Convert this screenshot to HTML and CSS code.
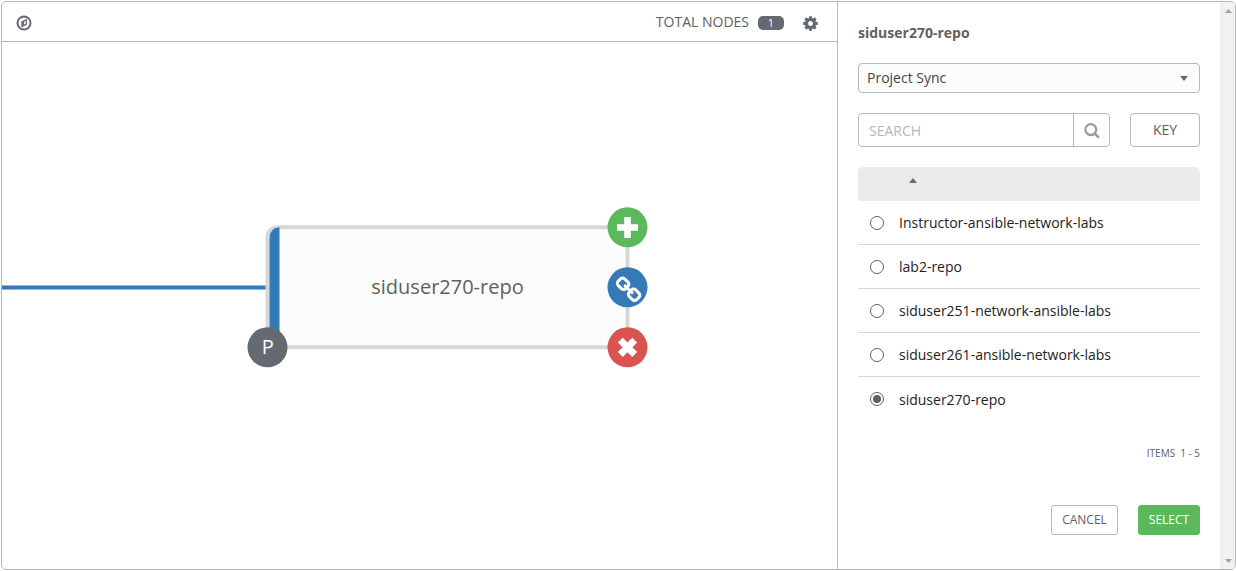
FILE: index.html
```html
<!DOCTYPE html>
<html lang="en">
<head>
<meta charset="utf-8">
<title>Workflow Visualizer</title>
<link rel="stylesheet" href="styles.css">
</head>
<body>
<div class="modal">
  <main class="graph">
    <header class="toolbar">
      <svg class="compass" width="16" height="16" viewBox="0 0 16 16"><circle cx="8" cy="8" r="6.500" fill="none" stroke="#646972" stroke-width="2"/><path fill="#646972" fill-rule="evenodd" d="M10.900 3.700V9.700L5.300 12.400V6.500ZM9.600 6 8 6.800V9.600L9.600 8.900Z"/></svg>
      <span class="total">TOTAL NODES</span>
      <span class="badge">1</span>
      <svg class="gear" width="17" height="17" viewBox="0 0 1792 1792"><path fill="#646972" d="M1152 896q0-106-75-181t-181-75-181 75-75 181 75 181 181 75 181-75 75-181zm512-109v222q0 12-8 23t-20 13l-185 28q-19 54-39 91 35 50 107 138 10 12 10 25t-9 23q-27 37-99 108t-94 71q-12 0-26-9l-138-108q-44 23-91 38-16 136-29 186-7 28-36 28h-222q-14 0-24.500-8.500t-11.500-21.500l-28-184q-49-16-90-37l-141 107q-10 9-25 9-14 0-25-11-126-114-165-168-7-10-7-23 0-12 8-23 15-21 51-66.500t54-70.500q-27-50-41-99l-183-27q-13-2-21-12.500t-8-23.500v-222q0-12 8-23t19-13l186-28q14-46 39-92-40-57-107-138-10-12-10-24 0-10 9-23 26-36 98.500-107.500t94.500-71.500q13 0 26 10l138 107q44-23 91-38 16-136 29-186 7-28 36-28h222q14 0 24.500 8.500t11.500 21.500l28 184q49 16 90 37l142-107q9-9 24-9 13 0 25 10 129 119 165 170 7 8 7 22 0 12-8 23-15 21-51 66.500t-54 70.500q26 50 41 98l183 28q13 2 21 12.500t8 23.500z"/></svg>
    </header>
    <svg class="canvas" width="835" height="527" viewBox="2 42 835 527">
      <path class="link" d="M0 287.500H266"/>
      <rect class="node" x="267.500" y="227.300" width="360" height="120" rx="10"/>
      <path class="stripe" d="M279.500 227.200V347.500H269.500V238Q270 227.700 279.500 227.200Z"/>
      <text class="node-name" x="447.500" y="294">siduser270-repo</text>
      <circle class="project" cx="267.500" cy="347.300" r="20"/>
      <text class="project-letter" x="267.800" y="354">P</text>
      <circle class="add" cx="627.500" cy="227.300" r="20"/>
      <path class="glyph" d="M624.200 217h6.600v7.200h7.200v6.600h-7.200v7.200h-6.600v-7.200H617v-6.600h7.200Z"/>
      <circle class="connect" cx="627.500" cy="287.300" r="20"/>
      <g transform="translate(614.600 276.300) scale(.0156)"><path class="glyph" d="M1520 1216q0-40-28-68l-208-208q-28-28-68-28-42 0-72 32 3 3 19 18.500t21.500 21.500 15 19 13 25.500 3.500 27.500q0 40-28 68t-68 28q-15 0-27.500-3.500t-25.500-13-19-15-21.500-21.500-18.500-19q-33 31-33 73 0 40 28 68l206 207q27 27 68 27 40 0 68-26l147-146q28-28 28-67zm-703-705q0-40-28-68l-206-207q-28-28-68-28-39 0-68 27l-147 146q-28 28-28 67 0 40 28 68l208 208q27 27 68 27 42 0 72-31-3-3-19-18.500t-21.500-21.500-15-19-13-25.500-3.500-27.500q0-40 28-68t68-28q15 0 27.500 3.500t25.500 13 19 15 21.500 21.500 18.500 19q33-31 33-73zm895 705q0 120-85 203l-147 146q-83 83-203 83-121 0-204-85l-206-207q-83-83-83-203 0-123 88-209l-88-88q-86 88-208 88-120 0-204-84l-208-208q-84-84-84-204t85-203l147-146q83-83 203-83 121 0 204 85l206 207q83 83 83 203 0 123-88 209l88 88q86-88 208-88 120 0 204 84l208 208q84 84 84 204z"/></g>
      <circle class="remove" cx="627.500" cy="347.300" r="20"/>
      <path class="cross" d="M620.300 340.100l14.400 14.400M634.700 340.100l-14.400 14.400"/>
    </svg>
  </main>
  <aside class="panel">
    <div class="form">
      <h1 class="title">siduser270-repo</h1>
      <div class="select"><span>Project Sync</span><svg width="8" height="5" viewBox="0 0 8 5"><path fill="#646972" d="M0 0h8L4 5Z"/></svg></div>
      <div class="search-row">
        <div class="search">
          <span class="placeholder">SEARCH</span>
          <span class="search-button"><svg width="16" height="16" viewBox="0 0 16 16" fill="none" stroke="#989ba1"><circle cx="6.800" cy="6.600" r="5.400" stroke-width="2.300"/><path stroke-width="2.700" stroke-linecap="round" d="M10.800 10.700l3.300 3.200"/></svg></span>
        </div>
        <span class="key">KEY</span>
      </div>
      <div class="list-head"><svg width="8" height="5" viewBox="0 0 8 5"><path fill="#646972" d="M0 5h8L4 0Z"/></svg></div>
      <div class="row"><span class="radio"></span>Instructor-ansible-network-labs</div>
      <div class="row"><span class="radio"></span>lab2-repo</div>
      <div class="row"><span class="radio"></span>siduser251-network-ansible-labs</div>
      <div class="row"><span class="radio"></span>siduser261-ansible-network-labs</div>
      <div class="row last"><span class="radio checked"></span>siduser270-repo</div>
      <div class="items"><span>ITEMS</span><span>1 - 5</span></div>
      <div class="actions"><span class="button">CANCEL</span><span class="button primary">SELECT</span></div>
    </div>
    <div class="scrollbar">
      <svg width="7" height="4" viewBox="0 0 7 4"><path fill="#a3a3a3" d="M0 4h7L3.500 0Z"/></svg>
      <svg width="7" height="4" viewBox="0 0 7 4"><path fill="#a3a3a3" d="M0 0h7L3.500 4Z"/></svg>
    </div>
  </aside>
</div>
</body>
</html>
```
FILE: styles.css
```css
* { box-sizing: border-box; }
body { margin: 0; padding: 1px 0 0 1px; height: 571px; overflow: hidden; background: #fff; color: #606060; font: 14px/20px "Open Sans", "Noto Sans", sans-serif; }
svg { display: block; flex: none; }
.modal { display: flex; width: 1235px; height: 569px; border: 1px solid #b7b7b7; border-radius: 5px; overflow: hidden; }
.graph { width: 836px; flex: none; border-right: 1px solid #b7b7b7; }
.toolbar { display: flex; align-items: center; height: 40px; padding: 0 18px 0 14px; border-bottom: 1px solid #b7b7b7; }
.compass { margin-top: 2px; }
.total { margin-left: auto; }
.badge { width: 26px; height: 14px; margin: 2px 18px 0 9px; border-radius: 5px; background: #646972; color: #fff; font-size: 11px; line-height: 14px; text-align: center; }
.gear { margin-top: 3px; }
.link { stroke: #337ab7; stroke-width: 4; }
.node { fill: #fcfcfc; stroke: #d7d7d7; stroke-width: 4; }
.stripe { fill: #337ab7; }
.node-name { font-size: 20px; fill: #606060; text-anchor: middle; }
.project { fill: #646972; }
.project-letter { font-size: 20px; fill: #fff; text-anchor: middle; }
.add { fill: #5cb85c; }
.connect { fill: #337ab7; }
.remove { fill: #d9534f; }
.glyph { fill: #fff; }
.cross { stroke: #fff; stroke-width: 7; }
.panel { display: flex; flex: 1; }
.form { flex: 1; padding: 21px 20px 0; }
.title { margin: 0 0 20px; font-size: 14px; line-height: 20px; font-weight: 700; }
.select { display: flex; align-items: center; justify-content: space-between; height: 30px; padding: 0 11px 0 8px; border: 1px solid #b7b7b7; border-radius: 4px; background: #fcfcfc; color: #444; }
.search-row { display: flex; gap: 20px; margin: 20px 0; }
.search { display: flex; width: 252px; height: 34px; border: 1px solid #b7b7b7; border-radius: 4px; line-height: 34px; color: #b7b7b7; }
.placeholder { flex: 1; padding-left: 10px; }
.search-button { display: flex; align-items: center; justify-content: center; width: 36px; padding-top: 2px; border-left: 1px solid #b7b7b7; }
.key { flex: 1; border: 1px solid #b7b7b7; border-radius: 4px; line-height: 32px; text-align: center; }
.list-head { height: 34px; padding: 11px 0 0 51px; border-radius: 5px 5px 0 0; background: #ebebeb; }
.row { display: flex; align-items: center; gap: 15px; height: 44px; padding-left: 12px; border-bottom: 1px solid #d7d7d7; color: #222; }
.row.last { height: 45px; border-bottom: 0; }
.radio { width: 14px; height: 14px; border: 1px solid #5f5f5f; border-radius: 50%; }
.checked { margin-bottom: 2px; padding: 2px; background: #606060 content-box; }
.items { display: flex; justify-content: flex-end; gap: 5px; margin-top: 21px; font-size: 10px; }
.actions { display: flex; justify-content: flex-end; gap: 20px; margin-top: 42px; }
.button { width: 67px; height: 30px; border: 1px solid #b7b7b7; border-radius: 3px; font-size: 12px; line-height: 28px; text-align: center; }
.primary { width: 62px; border-color: #5cb85c; background: #5cb85c; color: #fff; }
.scrollbar { display: flex; flex-direction: column; justify-content: space-between; align-items: center; width: 15px; padding: 7px 0 6px 2px; background: #f1f1f1; }
```
